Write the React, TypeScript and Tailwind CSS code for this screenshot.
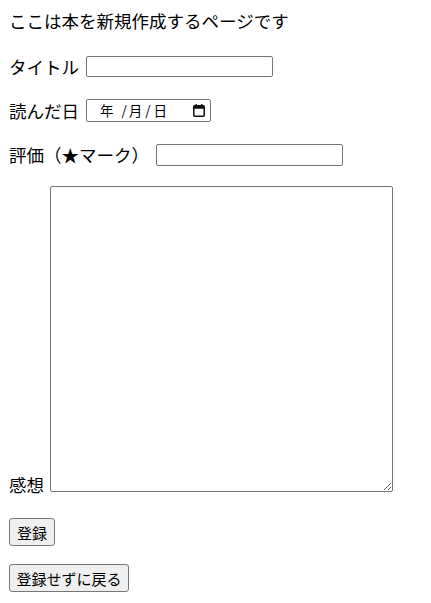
export default function App() {
  const font = { fontFamily: '"Noto Sans CJK JP", "Noto Sans", sans-serif' };

  return (
    <div className="min-h-screen bg-white pl-[9px] text-[17.5px] text-black" style={font}>
      <div className="flex h-[42px] items-center">ここは本を新規作成するページです</div>

      <div className="mt-[14px] flex h-[21px] items-center">
        <span className="w-[77px] leading-none">タイトル</span>
        <input type="text" className="h-[21px] w-[187px] rounded-[2px] border border-[#767676] bg-white px-[2px] text-[13px] outline-none" />
      </div>

      <div className="mt-[22px] flex h-[23px] items-center">
        <span className="w-[77px] leading-none">読んだ日</span>
        <div className="relative flex h-[23px] w-[125px] items-center rounded-[2px] border border-[#767676] bg-white text-[13.5px] leading-none">
          <span className="ml-[13px]">年</span>
          <span className="ml-[8px]">/</span>
          <span className="ml-[2px]">月</span>
          <span className="ml-[3px]">/</span>
          <span className="ml-[3px]">日</span>
          <svg className="absolute right-[5px] top-[4px]" width="12" height="13" viewBox="0 0 12 13">
            <rect x="0.75" y="1.75" width="10.5" height="10.5" rx="1" fill="none" stroke="#111" strokeWidth="1.5" />
            <rect x="0.75" y="1.75" width="10.5" height="3" fill="#111" />
            <rect x="2.5" y="0" width="1.5" height="2" fill="#111" />
            <rect x="8" y="0" width="1.5" height="2" fill="#111" />
          </svg>
        </div>
      </div>

      <div className="mt-[22px] flex h-[22px] items-center">
        <span className="w-[147px] leading-none">評価（★マーク）</span>
        <input type="text" className="h-[22px] w-[187px] rounded-[2px] border border-[#767676] bg-white px-[2px] text-[13px] outline-none" />
      </div>

      <div className="mt-[20px] flex items-end">
        <span className="mb-[-1px] w-[41px] leading-none">感想</span>
        <textarea className="h-[306px] w-[343px] resize rounded-[2px] border border-[#767676] bg-white outline-none" />
      </div>

      <div className="mt-[26px]">
        <button className="h-[28px] w-[46px] rounded-[3px] border border-[#767676] bg-[#efefef] text-[15px] leading-none">登録</button>
      </div>

      <div className="mt-[18px]">
        <button className="h-[28px] w-[120px] rounded-[3px] border border-[#767676] bg-[#efefef] text-[15px] leading-none">登録せずに戻る</button>
      </div>
    </div>
  );
}
